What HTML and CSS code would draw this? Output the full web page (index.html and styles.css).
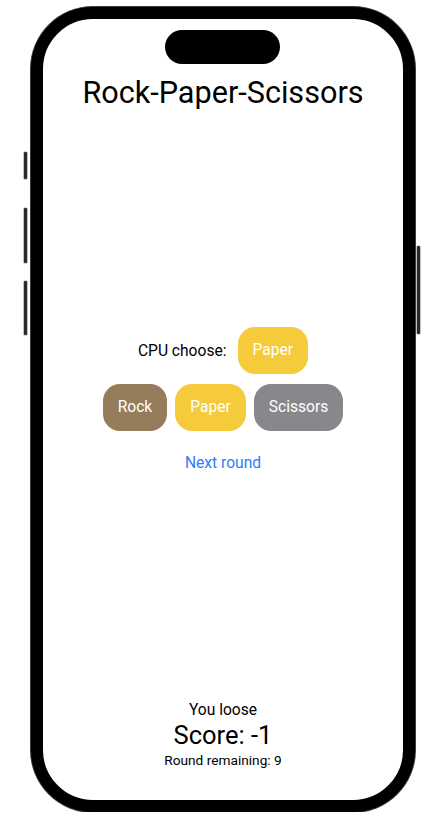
FILE: index.html
```html
<!DOCTYPE html>
<html lang="en">
<head>
<meta charset="utf-8">
<title>Rock-Paper-Scissors</title>
<link rel="stylesheet" href="styles.css">
</head>
<body>
<div class="device">
  <span class="side-btn side-silent"></span>
  <span class="side-btn side-vol-up"></span>
  <span class="side-btn side-vol-down"></span>
  <span class="side-btn side-power"></span>
  <div class="phone">
    <div class="screen">
      <div class="island"></div>
      <h1 class="title">Rock-Paper-Scissors</h1>
      <div class="game">
        <div class="cpu-row">
          <span class="cpu-label">CPU choose:</span>
          <span class="chip chip-yellow">Paper</span>
        </div>
        <div class="choices">
          <span class="chip chip-brown">Rock</span>
          <span class="chip chip-yellow">Paper</span>
          <span class="chip chip-gray">Scissors</span>
        </div>
        <a class="next">Next round</a>
      </div>
      <div class="status">
        <div class="result">You loose</div>
        <div class="score">Score: -1</div>
        <div class="remaining">Round remaining: 9</div>
      </div>
    </div>
  </div>
</div>
</body>
</html>
```

FILE: styles.css
```css
* { box-sizing: border-box; }
html, body {
  margin: 0;
  padding: 0;
  background: #fff;
}
body {
  font-family: Roboto, Inter, "Noto Sans", "Liberation Sans", sans-serif;
  color: #000;
}
.device {
  position: relative;
  width: 384px;
  height: 805px;
  margin: 7px 0 0 31px;
}
.phone {
  width: 384px;
  height: 805px;
  border: 12px solid #000;
  border-radius: 62px;
  box-shadow: 0 0 0 1px #3c3c3c;
  background: #fff;
  overflow: hidden;
}
.side-btn {
  position: absolute;
  width: 3px;
  background: #2b2b2b;
  box-shadow: 0 0 0 0.6px #9a9a9a;
  border-radius: 1px;
}
.side-silent { left: -7px; top: 145px; height: 27px; }
.side-vol-up { left: -7px; top: 201px; height: 55px; }
.side-vol-down { left: -7px; top: 274px; height: 54px; }
.side-power { left: 386px; top: 239px; height: 88px; }

.screen {
  position: relative;
  height: 100%;
  border-radius: 50px;
  display: flex;
  flex-direction: column;
  align-items: center;
}
.island {
  position: absolute;
  left: 122px;
  top: 11px;
  width: 115px;
  height: 34px;
  border-radius: 17px;
  background: #000;
}
.title {
  margin: 55px 0 0;
  font-size: 30.6px;
  line-height: 38px;
  font-weight: 400;
}
.game {
  margin-top: 215px;
  display: flex;
  flex-direction: column;
  align-items: center;
}
.cpu-row {
  display: flex;
  align-items: center;
  gap: 11px;
}
.cpu-label {
  font-size: 15.6px;
  line-height: 20px;
}
.chip {
  display: inline-block;
  padding: 13px 15px;
  font-size: 15.6px;
  line-height: 21px;
  color: #fff;
  border-radius: 17px;
}
.chip-yellow { background: #f5ca3b; }
.chip-brown { background: #957c5a; }
.chip-gray { background: #88878c; }
.choices {
  margin-top: 10px;
  display: flex;
  gap: 8px;
}
.next {
  margin-top: 22px;
  font-size: 15.6px;
  line-height: 20px;
  color: #2f7cf6;
}
.status {
  margin-top: 227px;
  display: flex;
  flex-direction: column;
  align-items: center;
}
.result {
  font-size: 15.6px;
  line-height: 20px;
}
.score {
  font-size: 25.5px;
  line-height: 30px;
}
.remaining {
  margin-top: 2px;
  font-size: 13.7px;
  line-height: 17px;
}
```
